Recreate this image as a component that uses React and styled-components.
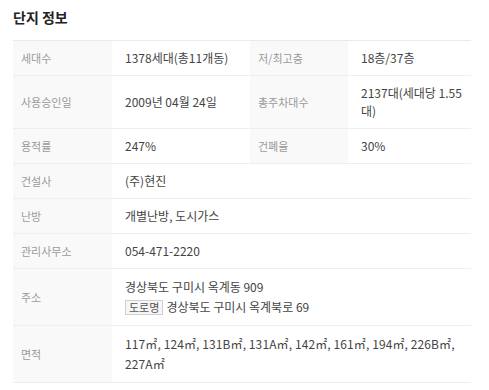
import React from "react";
import styled, { createGlobalStyle } from "styled-components";

const Global = createGlobalStyle`
  html, body { margin: 0; padding: 0; background: #fff; }
  body { font-family: "Noto Sans CJK KR", "Noto Sans", sans-serif; }
`;

const Wrap = styled.section`
  padding: 6px 18px 0 13px;
  width: 458px;
`;

const Title = styled.h2`
  margin: 0 0 12px 0;
  font-size: 14px;
  font-weight: 700;
  line-height: 22px;
  color: #222;
`;

const Table = styled.div`
  display: grid;
  grid-template-columns: 99px 138px 98px 123px;
  border-top: 1px solid #eaeaea;
`;

const Label = styled.div`
  background: #f9f9f9;
  color: #9a9a9a;
  font-size: 11px;
  padding: 8px 8px;
  line-height: ${(p) => p.$lh || 18}px;
  border-bottom: 1px solid #eeeeee;
  display: flex;
  align-items: center;
`;

const Value = styled.div`
  color: #444;
  font-size: 12px;
  padding: 8px 8px 8px 13px;
  line-height: ${(p) => p.$lh || 18}px;
  border-bottom: 1px solid #eeeeee;
  grid-column: ${(p) => (p.$wide ? "span 3" : "auto")};
  display: flex;
  flex-direction: column;
  justify-content: center;
`;

const AreaList = styled.div`
  letter-spacing: 0.1px;
`;

const AreaItem = styled.span`
  white-space: nowrap;
`;

const Badge = styled.span`
  display: inline-block;
  border: 1px solid #cfcfcf;
  background: #f6f6f6;
  color: #555;
  font-size: 11px;
  line-height: 13px;
  padding: 0 3px;
  margin-right: 3px;
`;

const areas = ["117㎡", "124㎡", "131B㎡", "131A㎡", "142㎡", "161㎡", "194㎡", "226B㎡", "227A㎡"];

export default function App() {
  return (
    <>
      <Global />
      <Wrap>
        <Title>단지 정보</Title>
        <Table>
          <Label>세대수</Label>
          <Value>1378세대(총11개동)</Value>
          <Label>저/최고층</Label>
          <Value>18층/37층</Value>

          <Label>사용승인일</Label>
          <Value>2009년 04월 24일</Value>
          <Label>총주차대수</Label>
          <Value>2137대(세대당 1.55대)</Value>

          <Label>용적률</Label>
          <Value>247%</Value>
          <Label>건폐율</Label>
          <Value>30%</Value>

          <Label>건설사</Label>
          <Value $wide>(주)현진</Value>

          <Label>난방</Label>
          <Value $wide>개별난방, 도시가스</Value>

          <Label>관리사무소</Label>
          <Value $wide>054-471-2220</Value>

          <Label $lh={20}>주소</Label>
          <Value $wide $lh={20}>
            <div>경상북도 구미시 옥계동 909</div>
            <div>
              <Badge>도로명</Badge>경상북도 구미시 옥계북로 69
            </div>
          </Value>

          <Label $lh={20}>면적</Label>
          <Value $wide $lh={20}>
            <AreaList>
              {areas.map((a, i) => (
                <React.Fragment key={a}>
                  <AreaItem>
                    {a}
                    {i < areas.length - 1 ? "," : ""}
                  </AreaItem>
                  {i < areas.length - 1 ? " " : ""}
                </React.Fragment>
              ))}
            </AreaList>
          </Value>
        </Table>
      </Wrap>
    </>
  );
}
